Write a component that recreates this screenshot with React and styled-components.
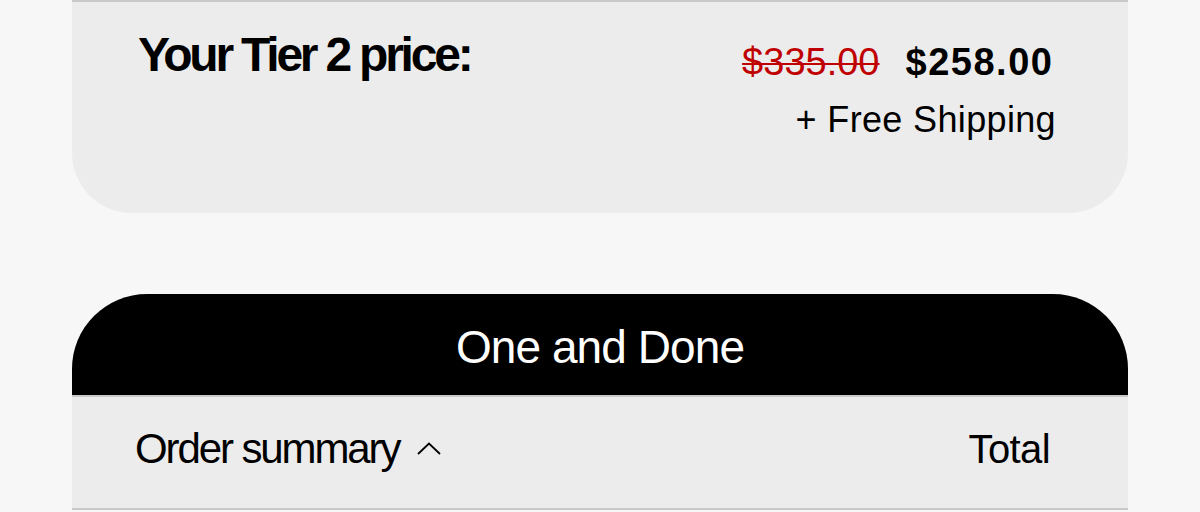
import React from "react";
import styled, { createGlobalStyle } from "styled-components";

const GlobalStyle = createGlobalStyle`
  html, body {
    margin: 0;
    background: #f7f7f7;
    font-family: "Liberation Sans", Arial, sans-serif;
    color: #000;
  }
`;

const Page = styled.div`
  padding: 0 72px;
  height: 512px;
  overflow: hidden;
`;

const PriceCard = styled.section`
  display: flex;
  justify-content: space-between;
  align-items: flex-start;
  height: 213px;
  box-sizing: border-box;
  padding: 27px 72px 0 66px;
  background: #ececec;
  border-top: 2px solid #c8c8c8;
  border-radius: 0 0 60px 60px;
`;

const Heading = styled.h2`
  margin: 0;
  font-size: 48px;
  line-height: 1;
  font-weight: 700;
  letter-spacing: -0.067em;
  padding-top: 2px;
`;

const PriceCol = styled.div`
  display: flex;
  flex-direction: column;
  align-items: flex-end;
  gap: 21px;
  margin-top: 14px;
`;

const PriceRow = styled.div`
  display: flex;
  align-items: baseline;
  gap: 26px;
  margin-right: 4px;
`;

const Price = styled.span`
  font-size: 38px;
  line-height: 1;
  letter-spacing: ${(p) => (p.$old ? "0" : "0.04em")};
  margin-right: ${(p) => (p.$old ? "0" : "-1.5px")};
  font-weight: ${(p) => (p.$old ? 400 : 700)};
  color: ${(p) => (p.$old ? "#c00000" : "#000")};
  text-decoration: ${(p) => (p.$old ? "line-through" : "none")};
  text-decoration-thickness: 2px;
`;

const Shipping = styled.span`
  font-size: 36px;
  line-height: 1;
  letter-spacing: 0.35px;
`;

const Plan = styled.section`
  margin-top: 81px;
`;

const PlanHeader = styled.div`
  display: flex;
  align-items: center;
  justify-content: center;
  height: 101px;
  padding-top: 4px;
  box-sizing: border-box;
  background: #000;
  color: #fff;
  border-radius: 75px 75px 0 0;
  font-size: 46px;
  line-height: 1;
  letter-spacing: -0.02em;
`;

const SummaryRow = styled.div`
  display: flex;
  align-items: center;
  justify-content: space-between;
  height: 115px;
  box-sizing: border-box;
  padding: 0 78px 8px 63px;
  background: #ececec;
  border-top: 2px solid #c8c8c8;
  border-bottom: 2px solid #c8c8c8;
`;

const Toggle = styled.div`
  display: flex;
  align-items: center;
  gap: 18px;
  font-size: 42px;
  line-height: 1;
  letter-spacing: -0.05em;
`;

const Total = styled.span`
  font-size: 40px;
  line-height: 1;
  letter-spacing: -0.015em;
`;

const Chevron = () => (
  <svg width="24" height="13" viewBox="0 0 24 13" fill="none">
    <path d="M1 12 L12 1.5 L23 12" stroke="#000" strokeWidth="1.8" />
  </svg>
);

export default function App() {
  return (
    <Page>
      <GlobalStyle />
      <PriceCard>
        <Heading>Your Tier 2 price:</Heading>
        <PriceCol>
          <PriceRow>
            <Price $old>$335.00</Price>
            <Price>$258.00</Price>
          </PriceRow>
          <Shipping>+ Free Shipping</Shipping>
        </PriceCol>
      </PriceCard>
      <Plan>
        <PlanHeader>One and Done</PlanHeader>
        <SummaryRow>
          <Toggle>
            Order summary
            <Chevron />
          </Toggle>
          <Total>Total</Total>
        </SummaryRow>
      </Plan>
    </Page>
  );
}
